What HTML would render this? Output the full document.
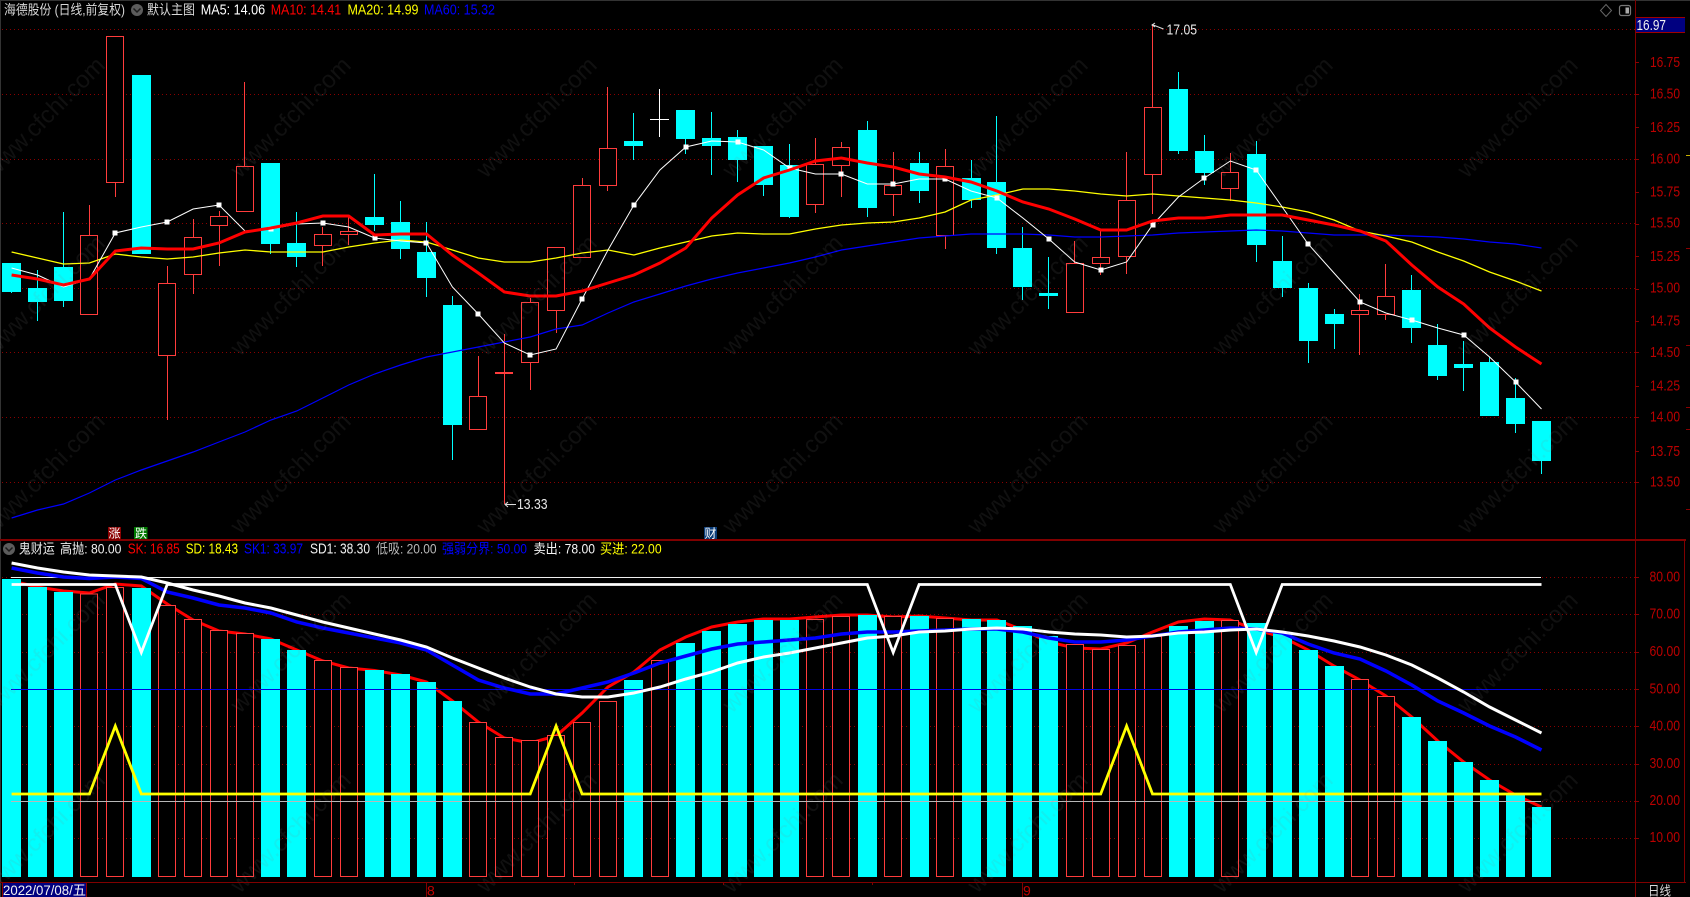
<!DOCTYPE html>
<html lang="zh">
<head>
<meta charset="utf-8">
<title>海德股份 日线</title>
<style>
html,body{margin:0;padding:0;background:#000;width:1690px;height:897px;overflow:hidden}
svg{display:block}
text{font-family:"Liberation Sans","Noto Sans CJK SC",sans-serif;white-space:pre}
.l{font-size:13.5px}
.n{font-size:14.5px}
.ax{font-size:15px;fill:#bb0000}
.wm text{font-size:24px;fill:#808080;fill-opacity:.12;font-family:"Liberation Sans",sans-serif}
.dot{stroke:#8a0000;stroke-width:1;stroke-dasharray:1 3;fill:none}
.tick{stroke:#8b0000;stroke-width:1}
</style>
</head>
<body>
<svg id="c" xmlns="http://www.w3.org/2000/svg" width="1690" height="897" viewBox="0 0 1690 897">
<rect width="1690" height="897" fill="#000"/>
<rect x="0" y="0" width="1690" height="1" fill="#333"/>
<rect x="0" y="0" width="1" height="897" fill="#333"/>
<g id="grid"></g>
<g id="chart"></g>
<g class="wm">
<text transform="translate(-6 179) rotate(-45)">www.cfchi.com</text>
<text transform="translate(240 179) rotate(-45)">www.cfchi.com</text>
<text transform="translate(486 179) rotate(-45)">www.cfchi.com</text>
<text transform="translate(732 179) rotate(-45)">www.cfchi.com</text>
<text transform="translate(977 179) rotate(-45)">www.cfchi.com</text>
<text transform="translate(1222 179) rotate(-45)">www.cfchi.com</text>
<text transform="translate(1467 179) rotate(-45)">www.cfchi.com</text>
<text transform="translate(-6 357) rotate(-45)">www.cfchi.com</text>
<text transform="translate(240 357) rotate(-45)">www.cfchi.com</text>
<text transform="translate(486 357) rotate(-45)">www.cfchi.com</text>
<text transform="translate(732 357) rotate(-45)">www.cfchi.com</text>
<text transform="translate(977 357) rotate(-45)">www.cfchi.com</text>
<text transform="translate(1222 357) rotate(-45)">www.cfchi.com</text>
<text transform="translate(1467 357) rotate(-45)">www.cfchi.com</text>
<text transform="translate(-6 535) rotate(-45)">www.cfchi.com</text>
<text transform="translate(240 535) rotate(-45)">www.cfchi.com</text>
<text transform="translate(486 535) rotate(-45)">www.cfchi.com</text>
<text transform="translate(732 535) rotate(-45)">www.cfchi.com</text>
<text transform="translate(977 535) rotate(-45)">www.cfchi.com</text>
<text transform="translate(1222 535) rotate(-45)">www.cfchi.com</text>
<text transform="translate(1467 535) rotate(-45)">www.cfchi.com</text>
<text transform="translate(-6 714) rotate(-45)">www.cfchi.com</text>
<text transform="translate(240 714) rotate(-45)">www.cfchi.com</text>
<text transform="translate(486 714) rotate(-45)">www.cfchi.com</text>
<text transform="translate(732 714) rotate(-45)">www.cfchi.com</text>
<text transform="translate(977 714) rotate(-45)">www.cfchi.com</text>
<text transform="translate(1222 714) rotate(-45)">www.cfchi.com</text>
<text transform="translate(1467 714) rotate(-45)">www.cfchi.com</text>
<text transform="translate(-6 894) rotate(-45)">www.cfchi.com</text>
<text transform="translate(240 894) rotate(-45)">www.cfchi.com</text>
<text transform="translate(486 894) rotate(-45)">www.cfchi.com</text>
<text transform="translate(732 894) rotate(-45)">www.cfchi.com</text>
<text transform="translate(977 894) rotate(-45)">www.cfchi.com</text>
<text transform="translate(1222 894) rotate(-45)">www.cfchi.com</text>
<text transform="translate(1467 894) rotate(-45)">www.cfchi.com</text>
</g>

<!-- frame -->
<rect x="0" y="539" width="1686" height="2" fill="#800000"/>
<rect x="0" y="882" width="1686" height="1" fill="#800000"/>
<rect x="1635" y="0" width="1" height="897" fill="#800000"/>
<rect x="1684" y="540" width="1" height="342" fill="#800000"/>

<!-- legends -->
<text class="l" x="4" y="14.5" fill="#d8d8d8" textLength="121" lengthAdjust="spacingAndGlyphs">海德股份 (日线,前复权)</text>
<circle cx="137" cy="10" r="6" fill="#5c5c5c"/>
<path d="M133.5 8.5 137 12 140.5 8.5" fill="none" stroke="#1c1c1c" stroke-width="1.5"/>
<text class="l" x="147" y="14.5" fill="#d8d8d8" textLength="48" lengthAdjust="spacingAndGlyphs">默认主图</text>
<text class="n" x="200.7" y="14.5" fill="#fff" textLength="64.5" lengthAdjust="spacingAndGlyphs">MA5: 14.06</text>
<text class="n" x="270.7" y="14.5" fill="#f00" textLength="70.5" lengthAdjust="spacingAndGlyphs">MA10: 14.41</text>
<text class="n" x="347.5" y="14.5" fill="#ff0" textLength="71" lengthAdjust="spacingAndGlyphs">MA20: 14.99</text>
<text class="n" x="424" y="14.5" fill="#00f" textLength="71" lengthAdjust="spacingAndGlyphs">MA60: 15.32</text>

<circle cx="9" cy="549" r="6" fill="#5c5c5c"/>
<path d="M5.5 547.5 9 551 12.5 547.5" fill="none" stroke="#1c1c1c" stroke-width="1.5"/>
<text class="l" x="18.7" y="553.5" fill="#e8e8e8" textLength="36" lengthAdjust="spacingAndGlyphs">鬼财运</text>
<text class="l" x="60" y="553.5" fill="#f0f0f0" textLength="61.4" lengthAdjust="spacingAndGlyphs">高抛: 80.00</text>
<text class="n" x="127.7" y="553.5" fill="#f00" textLength="52" lengthAdjust="spacingAndGlyphs">SK: 16.85</text>
<text class="n" x="185.7" y="553.5" fill="#ff0" textLength="52.3" lengthAdjust="spacingAndGlyphs">SD: 18.43</text>
<text class="n" x="244" y="553.5" fill="#00f" textLength="59" lengthAdjust="spacingAndGlyphs">SK1: 33.97</text>
<text class="n" x="310" y="553.5" fill="#f0f0f0" textLength="60" lengthAdjust="spacingAndGlyphs">SD1: 38.30</text>
<text class="l" x="376" y="553.5" fill="#b8b8b8" textLength="60.6" lengthAdjust="spacingAndGlyphs">低吸: 20.00</text>
<text class="l" x="442" y="553.5" fill="#00f" textLength="85" lengthAdjust="spacingAndGlyphs">强弱分界: 50.00</text>
<text class="l" x="533.5" y="553.5" fill="#f4f4f4" textLength="61.5" lengthAdjust="spacingAndGlyphs">卖出: 78.00</text>
<text class="l" x="600" y="553.5" fill="#ff0" textLength="61.6" lengthAdjust="spacingAndGlyphs">买进: 22.00</text>

<!-- top-right icons -->
<path d="M1606 4.5 1611.5 10.5 1606 16.5 1600.5 10.5Z" fill="none" stroke="#666" stroke-width="1"/>
<rect x="1619.5" y="5.5" width="11" height="10" rx="2" fill="none" stroke="#777" stroke-width="1.2"/>
<rect x="1625.5" y="7.5" width="3.5" height="6" fill="#aaa"/>

<!-- price box -->
<rect x="1636" y="17" width="49" height="16" fill="#000080"/>
<path d="M1636 17.5H1685M1636 32.5H1685" stroke="#a00000" stroke-width="1"/>
<text class="n" x="1636.5" y="30" fill="#f2f2f2" textLength="29.5" lengthAdjust="spacingAndGlyphs">16.97</text>

<!-- price axis -->
<text class="ax" x="1650" y="67" textLength="30" lengthAdjust="spacingAndGlyphs">16.75</text>
<text class="ax" x="1650" y="98.7" textLength="30" lengthAdjust="spacingAndGlyphs">16.50</text>
<text class="ax" x="1650" y="132" textLength="30" lengthAdjust="spacingAndGlyphs">16.25</text>
<text class="ax" x="1650" y="163.7" textLength="30" lengthAdjust="spacingAndGlyphs">16.00</text>
<text class="ax" x="1650" y="196.7" textLength="30" lengthAdjust="spacingAndGlyphs">15.75</text>
<text class="ax" x="1650" y="227.7" textLength="30" lengthAdjust="spacingAndGlyphs">15.50</text>
<text class="ax" x="1650" y="261" textLength="30" lengthAdjust="spacingAndGlyphs">15.25</text>
<text class="ax" x="1650" y="292.3" textLength="30" lengthAdjust="spacingAndGlyphs">15.00</text>
<text class="ax" x="1650" y="325.7" textLength="30" lengthAdjust="spacingAndGlyphs">14.75</text>
<text class="ax" x="1650" y="357" textLength="30" lengthAdjust="spacingAndGlyphs">14.50</text>
<text class="ax" x="1650" y="390.7" textLength="30" lengthAdjust="spacingAndGlyphs">14.25</text>
<text class="ax" x="1650" y="421.7" textLength="30" lengthAdjust="spacingAndGlyphs">14.00</text>
<text class="ax" x="1650" y="456" textLength="30" lengthAdjust="spacingAndGlyphs">13.75</text>
<text class="ax" x="1650" y="486.7" textLength="30" lengthAdjust="spacingAndGlyphs">13.50</text>

<text class="ax" x="1649.5" y="581.3" textLength="30.5" lengthAdjust="spacingAndGlyphs">80.00</text>
<text class="ax" x="1649.5" y="618.3" textLength="30.5" lengthAdjust="spacingAndGlyphs">70.00</text>
<text class="ax" x="1649.5" y="656" textLength="30.5" lengthAdjust="spacingAndGlyphs">60.00</text>
<text class="ax" x="1649.5" y="693.3" textLength="30.5" lengthAdjust="spacingAndGlyphs">50.00</text>
<text class="ax" x="1649.5" y="730.7" textLength="30.5" lengthAdjust="spacingAndGlyphs">40.00</text>
<text class="ax" x="1649.5" y="768" textLength="30.5" lengthAdjust="spacingAndGlyphs">30.00</text>
<text class="ax" x="1649.5" y="805" textLength="30.5" lengthAdjust="spacingAndGlyphs">20.00</text>
<text class="ax" x="1649.5" y="842" textLength="30.5" lengthAdjust="spacingAndGlyphs">10.00</text>

<!-- extreme labels -->
<path d="M1152 24.5 1163.5 29M1155 23 1152 25 1155 27" fill="none" stroke="#ddd" stroke-width="1"/>
<text class="n" x="1166.5" y="34.5" fill="#e8e8e8" textLength="30.5" lengthAdjust="spacingAndGlyphs">17.05</text>
<path d="M505 504.5H516M508 502 505 504.5 508 507" fill="none" stroke="#ddd" stroke-width="1"/>
<text class="n" x="517" y="509" fill="#e8e8e8" textLength="30.5" lengthAdjust="spacingAndGlyphs">13.33</text>

<!-- signal marks -->
<rect x="108" y="527" width="13" height="12" fill="#8b0000"/>
<text x="108.5" y="537.5" font-size="12" fill="#fff">涨</text>
<rect x="134" y="527" width="13.5" height="12" fill="#007a00"/>
<text x="135" y="537.5" font-size="12" fill="#fff">跌</text>
<rect x="704" y="527" width="13" height="12" fill="#0a3c78"/>
<text x="704.5" y="537.5" font-size="12" fill="#fff">财</text>

<!-- time axis -->
<rect x="2" y="883" width="85" height="14" fill="#000080"/>
<path d="M2.5 883V897M86.5 883V897" stroke="#8b0000"/>
<text x="3" y="895" font-size="14" fill="#f2f2f2" textLength="83" lengthAdjust="spacingAndGlyphs">2022/07/08/五</text>
<path d="M426.5 882V897M1022.5 882V897" stroke="#800000"/>
<path d="M574.5 882V885M723.5 882V885M872.5 882V885" stroke="#800000"/>
<text x="427" y="895.5" font-size="14" fill="#c00000">8</text>
<text x="1023" y="895.5" font-size="14" fill="#c00000">9</text>
<text x="1648" y="895.5" font-size="13" fill="#d8d8d8" textLength="23" lengthAdjust="spacingAndGlyphs">日线</text>
<g id="ticks"></g>
</svg>
<script>
(function(){
var NS="http://www.w3.org/2000/svg";
var xc=function(i){return 11.6+25.93*i};
function el(p,n,a){var e=document.createElementNS(NS,n);for(var k in a)e.setAttribute(k,a[k]);p.appendChild(e);return e}
var G=document.getElementById("grid"),C=document.getElementById("chart"),T=document.getElementById("ticks");

/* dotted grid */
[29.5,94.5,159.5,223.5,288.5,352.5,417.5,482.5,577.5,614.5,652.5,689.5,726.5,764.5,801.5,838.5].forEach(function(y){
 el(G,"line",{x1:2,x2:1635,y1:y,y2:y,"class":"dot"});
});
/* axis ticks */
[62,94,127,159,192,224,256,289,321,352,386,417,451,482,577,614,652,689,726,764,801,838].forEach(function(y){
 el(T,"line",{x1:1635,x2:1639,y1:y+.5,y2:y+.5,"class":"tick"});
});
[248,345,407,429,509].forEach(function(y){el(T,"line",{x1:1686,x2:1690,y1:y+.5,y2:y+.5,"class":"tick"})});
el(T,"line",{x1:1686,x2:1690,y1:155.5,y2:155.5,stroke:"#c8b000","stroke-width":1});

/* candles: [high, top, bottom, low, type] */
var K=[
[null,263,292,293,'C'],[270,288,302,321,'C'],[212,267,301,307,'C'],[205,235,315,null,'R'],[null,36,183,197,'R'],
[null,75,254,null,'C'],[266,283,356,420,'R'],[219,237,275,294,'R'],[211,216,226,266,'R'],[82,166,212,null,'R'],
[null,163,244,254,'C'],[212,243,257,267,'C'],[227,234,246,266,'R'],[217,231,235,245,'R'],[174,217,225,231,'C'],
[201,222,249,259,'C'],[222,252,278,297,'C'],[296,305,425,460,'C'],[356,396,430,null,'R'],[334,372,373,504,'R'],
[298,302,363,390,'R'],[null,247,311,333,'R'],[178,185,258,null,'R'],[87,148,186,191,'R'],[113,141,146,160,'C'],
[89,119,120,137,'W'],[null,110,139,154,'C'],[112,138,146,175,'C'],[130,137,160,182,'C'],[null,146,185,196,'C'],
[144,165,217,218,'C'],[138,164,205,213,'R'],[142,147,166,197,'R'],[121,130,208,217,'C'],[152,185,195,216,'R'],
[152,163,191,203,'C'],[149,166,236,249,'R'],[160,178,200,208,'C'],[116,182,248,254,'C'],[227,248,287,300,'C'],
[257,293,296,309,'C'],[241,263,313,null,'R'],[230,257,264,275,'R'],[152,200,257,274,'R'],[25,107,175,214,'R'],
[72,89,151,154,'C'],[135,151,173,185,'C'],[153,172,189,201,'R'],[141,154,245,262,'C'],[236,261,288,297,'C'],
[283,288,341,363,'C'],[309,314,324,349,'C'],[294,310,315,355,'R'],[264,296,315,320,'R'],[275,290,328,343,'C'],
[324,345,376,380,'C'],[341,364,368,391,'C'],[357,362,416,null,'C'],[378,398,424,433,'C'],[null,421,461,474,'C']
];
var CY="#00ffff",RD="#ff3c3c";
function wick(g,x,y1,y2,c){el(g,"rect",{x:x,y:y1,width:1,height:y2-y1,fill:c,"shape-rendering":"crispEdges"})}
var up=el(C,"g",{});
K.forEach(function(k,i){
 var x=xc(i),wx=Math.floor(x),t=k[4],c=t=='C'?CY:(t=='R'?RD:'#fff');
 if(k[0]!==null)wick(up,wx,k[0],k[1],c);
 if(k[3]!==null)wick(up,wx,k[2],k[3],c);
 if(t=='C')el(up,"rect",{x:Math.round(x-9.5),y:k[1],width:19,height:k[2]-k[1],fill:CY,"shape-rendering":"crispEdges"});
 else if(t=='W')el(up,"rect",{x:Math.round(x-9.5),y:k[1],width:19,height:1,fill:'#fff',"shape-rendering":"crispEdges"});
 else el(up,"rect",{x:Math.round(x-9)+.5,y:k[1]+.5,width:17,height:k[2]-k[1]-1+ (k[2]-k[1]<2?1:0),fill:"#000",stroke:RD,"stroke-width":1,"shape-rendering":"crispEdges"});
});

function line(g,ys,c,w){
 var s=ys.map(function(y,i){return xc(i).toFixed(1)+","+y}).join(" ");
 el(g,"polyline",{points:s,fill:"none",stroke:c,"stroke-width":w,"stroke-linejoin":"miter"});
}
var MA60=[518,510,504,493,480,470,461,452,442,432,420,411,398,385,374,365,357,352,347,342,337,329,325,313,302,294,286,279,273,268,263,257,250,246,242,238,236,234,234,234,235,237,237,236,235,233,232,231,230,231,233,235,235,235,236,237,239,242,244,248];
var MA20=[252,258,264,263,254,257,259,257,253,250,252,252,252,247,243,240,242,250,258,262,262,258,253,250,255,248,242,236,233,234,234,229,225,223,222,218,212,200,195,189,189,191,194,196,194,196,198,200,203,207,212,220,231,236,242,252,261,272,281,291];
var MA5=[268,275,287,279,233,227,222,209,205,231,229,224,223,227,238,241,243,287,314,343,355,349,299,250,205,170,147,141,142,150,168,174,174,184,184,179,179,191,198,218,239,262,270,262,225,197,178,161,170,207,244,273,302,313,320,328,335,357,382,409];
var MA10=[275,279,285,279,251,248,249,249,243,232,228,223,216,216,235,234,234,255,273,292,296,296,291,283,275,263,248,218,195,178,170,161,158,163,167,174,177,182,191,202,209,219,230,230,221,218,218,215,215,215,220,225,231,241,265,287,304,328,347,364];
line(up,MA60,"#0000ff",1.2);
line(up,MA20,"#ffff00",1.3);
line(up,MA5,"#ffffff",1);
MA5.forEach(function(y,i){if(i%2==0&&i>=4&&i<=58)el(up,"rect",{x:Math.round(xc(i))-2.5,y:y-2.5,width:5,height:5,fill:"#fff"})});
line(up,MA10,"#ff0000",3);

/* lower panel */
var SK=[581,587,591,593,584,586,604,620,631,634,639,650,661,668,670.5,675,682,701,722,738,743,736,713,687,672,650,637,627,622,619,619,617,615,615,617,616,618,620,620,630,642,648,649,643,632,622,619,620,630,637,650,666,680,696,717,741,762,780,795,807];
var BAR=[579,587,592,593.5,587,588,605,619,630,633,639,650,660,667,670,674,682,701,722,737,740,735,722,701,680,660,643,631,624,620,620,619,616,615,616,616,618,619,620,626,636,644,649,645,636,626,621,620,623,633,650,666,679,696,717,741,762,780,795,807];
var TY=['C','C','C','R','R','C','R','R','R','R','C','C','R','R','C','C','C','C','R','R','R','R','R','R','C','R','C','C','C','C','C','R','R','C','R','C','R','C','C','C','C','R','R','R','R','C','C','R','C','C','C','C','R','R','C','C','C','C','C','C'];
var SK1=[568,573,577,578.5,577,578.5,592,598,605,608,613,622,628,633,638,643,650,665,680,688,694,694,688,682,673,663,656,649,644,642,640,638,634,632,632,631,630,629,629,632,638,642,642,640,636,632,630,628,629,633,644,653,659,671,685,701,713,726,737,750];
var SD1=[563,568,572,575,576,577,583,590,596,603,608,615,622,628,634,640,647,658,668,678,687,694,697,697,693,687,679,672,663,657,653,648,643,638,636,632,631,629,628,629,632,634,635,637,636,633,632,630,629,632,636,641,647,655,665,678,692,707,720,733];
var lo=el(C,"g",{});
line(lo,SK,"#ff0000",3);
TY.forEach(function(t,i){
 var x=xc(i),y=BAR[i];
 if(t=='C')el(lo,"rect",{x:Math.round(x-9.5),y:y,width:19,height:877-y,fill:CY,"shape-rendering":"crispEdges"});
 else el(lo,"rect",{x:Math.round(x-9)+.5,y:y+.5,width:17,height:876-y,fill:"#000",stroke:RD,"stroke-width":1,"shape-rendering":"crispEdges"});
});
function hl(y,c,w){el(lo,"line",{x1:11,x2:1541,y1:y,y2:y,stroke:c,"stroke-width":w||1})}
hl(577.5,"#f0f0f0");hl(689.5,"#0000e0");hl(801.5,"#b8b8b8");
var SELL=[],BUY=[];
for(var i=0;i<60;i++){
 SELL.push((i==5||i==34||i==48)?652.5:584.5);
 BUY.push((i==4||i==21||i==43)?726:794);
}
line(lo,SK1,"#0000ff",3.5);
line(lo,SD1,"#ffffff",3);
line(lo,SELL,"#ffffff",2.8);
line(lo,BUY,"#ffff00",2.8);
})();
</script>
</body>
</html>
